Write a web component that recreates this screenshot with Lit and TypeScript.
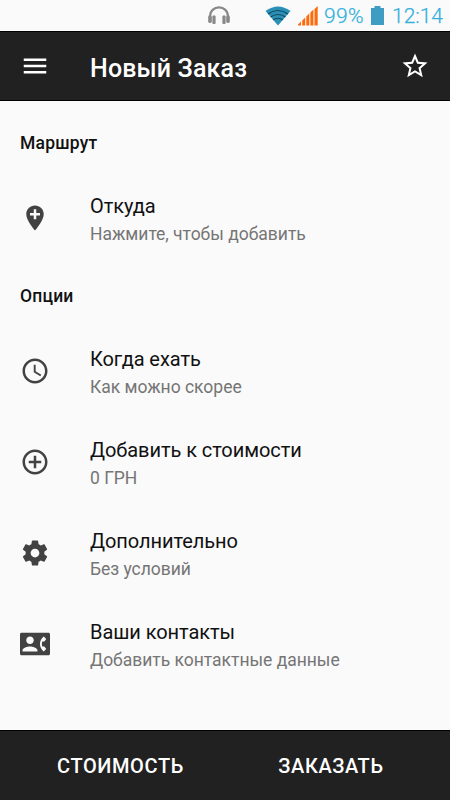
import { LitElement, html, css, svg } from "lit";
import { customElement, property } from "lit/decorators.js";

const icons: Record<string, string> = {
  menu: "M3 18h18v-2H3v2zm0-5h18v-2H3v2zm0-7v2h18V6H3z",
  star: "M22 9.24l-7.19-.62L12 2 9.19 8.63 2 9.24l5.46 4.73L5.82 21 12 17.27 18.18 21l-1.63-7.03L22 9.24zM12 15.4l-3.76 2.27 1-4.28-3.32-2.88 4.38-.38L12 6.1l1.71 4.04 4.38.38-3.32 2.88 1 4.28L12 15.4z",
  place: "M12 2C8.14 2 5 5.14 5 9c0 5.25 7 13 7 13s7-7.75 7-13c0-3.86-3.14-7-7-7zm4 8h-3v3h-2v-3H8V8h3V5h2v3h3v2z",
  clock: "M11.99 2C6.47 2 2 6.48 2 12s4.47 10 9.99 10C17.52 22 22 17.52 22 12S17.52 2 11.99 2zM12 20c-4.42 0-8-3.58-8-8s3.58-8 8-8 8 3.58 8 8-3.58 8-8 8zm.5-13H11v6l5.25 3.15.75-1.23-4.5-2.67V7z",
  plus: "M13 7h-2v4H7v2h4v4h2v-4h4v-2h-4V7zm-1-5C6.48 2 2 6.48 2 12s4.48 10 10 10 10-4.48 10-10S17.52 2 12 2zm0 18c-4.41 0-8-3.59-8-8s3.59-8 8-8 8 3.59 8 8-3.59 8-8 8z",
  gear: "M19.43 12.98c.04-.32.07-.64.07-.98s-.03-.66-.07-.98l2.11-1.65c.19-.15.24-.42.12-.64l-2-3.46c-.12-.22-.39-.3-.61-.22l-2.49 1c-.52-.4-1.08-.73-1.69-.98l-.38-2.65C14.46 2.18 14.25 2 14 2h-4c-.25 0-.46.18-.49.42l-.38 2.65c-.61.25-1.17.59-1.69.98l-2.49-1c-.23-.09-.49 0-.61.22l-2 3.46c-.13.22-.07.49.12.64l2.11 1.65c-.04.32-.07.65-.07.98s.03.66.07.98l-2.11 1.65c-.19.15-.24.42-.12.64l2 3.46c.12.22.39.3.61.22l2.49-1c.52.4 1.08.73 1.69.98l.38 2.65c.03.24.24.42.49.42h4c.25 0 .46-.18.49-.42l.38-2.65c.61-.25 1.17-.59 1.69-.98l2.49 1c.23.09.49 0 .61-.22l2-3.46c.12-.22.07-.49-.12-.64l-2.11-1.65zM12 15.5c-1.93 0-3.5-1.57-3.5-3.5s1.57-3.5 3.5-3.5 3.5 1.57 3.5 3.5-1.57 3.5-3.5 3.5z",
  contact: "M22.800 3H1.200C.5 3 0 3.500 0 4.200v15.600c0 .7.5 1.200 1.200 1.200h21.600c.7 0 1.200-.5 1.200-1.200V4.200c0-.7-.5-1.200-1.200-1.200zM8 6c1.66 0 3 1.34 3 3s-1.34 3-3 3-3-1.34-3-3 1.34-3 3-3zm6 12H2v-1c0-2 4-3.1 6-3.1s6 1.1 6 3.1v1zm3.85-4h1.64L21 16l-1.99 1.99c-1.31-.98-2.28-2.38-2.73-3.99-.18-.64-.28-1.31-.28-2s.1-1.36.28-2c.45-1.62 1.42-3.01 2.73-3.99L21 8l-1.51 2h-1.64c-.22.63-.35 1.3-.35 2s.13 1.37.35 2z",
};

@customElement("md-icon")
class MdIcon extends LitElement {
  @property() name = "menu";
  static styles = css`
    :host { display: block; width: 30px; height: 30px; flex: none; }
    svg { display: block; width: 30px; height: 30px; fill: currentColor; }
  `;
  render() {
    return html`<svg viewBox="0 0 24 24">${svg`<path d=${icons[this.name]} />`}</svg>`;
  }
}

@customElement("option-row")
class OptionRow extends LitElement {
  @property() icon = "";
  @property() heading = "";
  @property() detail = "";
  static styles = css`
    :host { display: flex; align-items: center; height: 91.25px; padding-left: 20px; box-sizing: border-box; }
    md-icon { color: #424242; margin-right: 40px; }
    .text { padding-top: 5px; white-space: nowrap; }
    .heading { font-size: 20px; line-height: 27px; color: #111; letter-spacing: -0.07px; }
    .detail { font-size: 17.5px; line-height: 28px; color: #757575; letter-spacing: -0.02px; }
  `;
  render() {
    return html`
      <md-icon name=${this.icon}></md-icon>
      <div class="text">
        <div class="heading">${this.heading}</div>
        <div class="detail">${this.detail}</div>
      </div>`;
  }
}

@customElement("app-root")
class AppRoot extends LitElement {
  static styles = css`
    :host {
      display: flex; flex-direction: column; width: 450px; height: 800px;
      background: #fafafa; font-family: Roboto, "Noto Sans", sans-serif; overflow: hidden;
    }
    .status {
      display: flex; align-items: center; justify-content: flex-end; height: 31px; flex: none;
      padding-right: 7px; box-sizing: border-box; color: #33b0dc; font-size: 21px; font-weight: 300;
      -webkit-text-stroke: 0.25px #33b0dc;
    }
    .status svg { display: block; flex: none; }
    .phones { margin-right: 35px; }
    .wifi { margin-right: 7px; }
    .signal { margin-right: 6px; }
    .percent { width: 41px; margin-right: 6px; letter-spacing: 0.4px; }
    .battery { margin-right: 8px; }
    .time { width: 51px; }
    .bar {
      display: flex; align-items: center; height: 70px; flex: none; box-sizing: border-box;
      background: #212121; color: #fff; border-top: 1px solid #000; border-bottom: 1px solid #000;
      padding: 0 20px;
    }
    .title { flex: 1; margin-left: 40px; font-size: 25px; font-weight: 500; padding-top: 4px; letter-spacing: 0.15px; }
    main { flex: 1; }
    .section {
      height: 61.25px; box-sizing: border-box; padding: 18px 0 0 20px;
      font-size: 17.5px; line-height: 28px; font-weight: 500; color: #111; letter-spacing: 0.2px;
    }
    .section.first { height: 71.5px; padding-top: 28px; }
    .actions {
      display: grid; grid-template-columns: 241px 180px; height: 70px; flex: none; box-sizing: border-box;
      align-items: center; text-align: center; background: #212121; border-top: 1px solid #000;
      color: #fff; font-size: 20px; font-weight: 500; letter-spacing: 0.6px;
    }
  `;
  render() {
    return html`
      <div class="status">
        <svg class="phones" width="22" height="19" viewBox="0 0 22 19">
          <path d="M2 13V10a9 8.6 0 0 1 18 0v3" fill="none" stroke="#888" stroke-width="2.3" />
          <rect x="0.2" y="9.6" width="3.600" height="7.4" rx="1.4" fill="#888" />
          <rect x="4.4" y="9.6" width="3.200" height="8.4" rx="1" fill="#888" />
          <rect x="14.4" y="9.6" width="3.200" height="8.4" rx="1" fill="#888" />
          <rect x="18.2" y="9.6" width="3.600" height="7.4" rx="1.4" fill="#888" />
        </svg>
        <svg class="wifi" width="26" height="20" viewBox="0 0 26 20">
          <path d="M0.5 5Q13 -4 25.500 5L13 19.500Z" fill="#2a90b5" />
          <g fill="none" stroke="#12465a" stroke-width="1.100">
            <path d="M3 8Q13 1 23 8" />
            <path d="M5.500 11Q13 5.900 20.500 11" />
            <path d="M8 13.900Q13 10.600 18 13.900" />
          </g>
        </svg>
        <svg class="signal" width="20" height="20" viewBox="0 0 20 20" fill="#ff6a0d">
          <path d="M0 19.500v-1l3-3v4zM4.200 19.500v-5l3-3v8zM8.300 19.500v-9l3-3v12zM12.400 19.500v-13l3-3v16zM16.500 19.500V3l3.200-3v19.500z" />
        </svg>
        <span class="percent">99%</span>
        <svg class="battery" width="13" height="19" viewBox="0 0 13 19">
          <path d="M0 2h3.500V0h6v2H13v17H0z" fill="#3f9cc2" />
        </svg>
        <span class="time">12:14</span>
      </div>
      <header class="bar">
        <md-icon name="menu"></md-icon>
        <div class="title">Новый Заказ</div>
        <md-icon name="star"></md-icon>
      </header>
      <main>
        <div class="section first">Маршрут</div>
        <option-row icon="place" heading="Откуда" detail="Нажмите, чтобы добавить"></option-row>
        <div class="section">Опции</div>
        <option-row icon="clock" heading="Когда ехать" detail="Как можно скорее"></option-row>
        <option-row icon="plus" heading="Добавить к стоимости" detail="0 ГРН"></option-row>
        <option-row icon="gear" heading="Дополнительно" detail="Без условий"></option-row>
        <option-row icon="contact" heading="Ваши контакты" detail="Добавить контактные данные"></option-row>
      </main>
      <footer class="actions">
        <div>СТОИМОСТЬ</div>
        <div>ЗАКАЗАТЬ</div>
      </footer>`;
  }
}
